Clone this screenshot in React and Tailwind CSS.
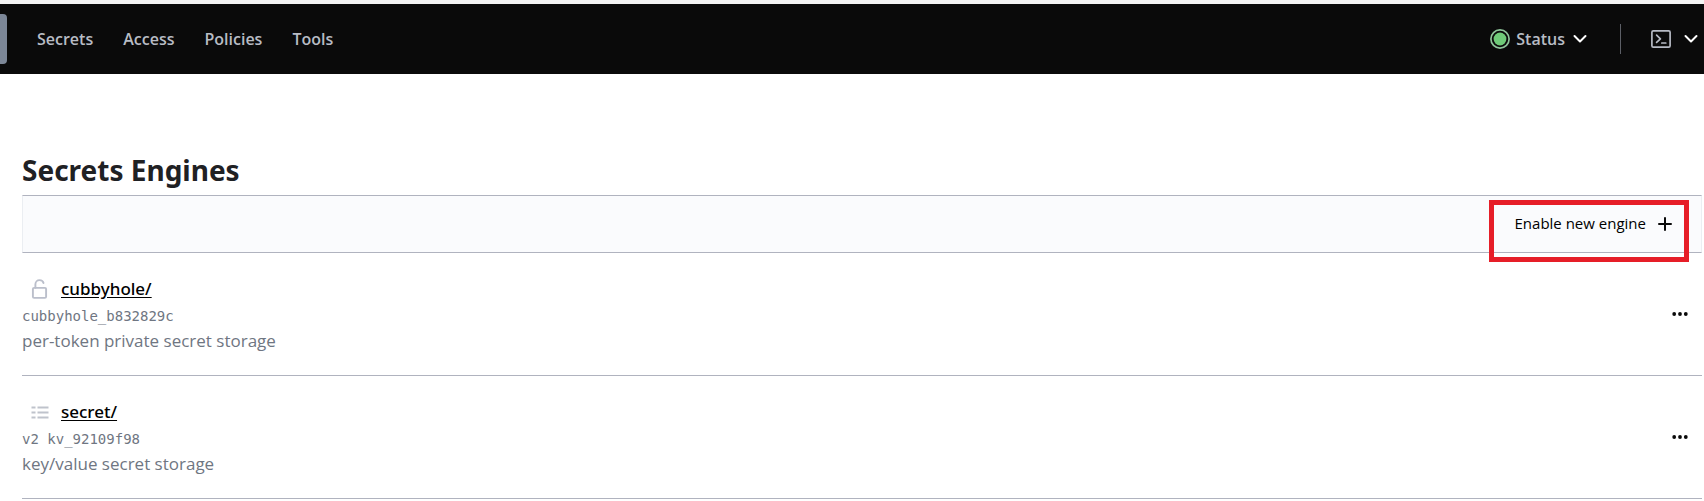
import React from "react";

const NAV = ["Secrets", "Access", "Policies", "Tools"];

const ENGINES = [
  { name: "cubbyhole/", accessor: "cubbyhole_b832829c", description: "per-token private secret storage", icon: "lock" },
  { name: "secret/", accessor: "v2 kv_92109f98", description: "key/value secret storage", icon: "list" },
];

function Chevron() {
  return (
    <svg width="14" height="14" viewBox="0 0 14 14" fill="none" stroke="#fff" strokeWidth="2" strokeLinecap="round" strokeLinejoin="round" aria-hidden="true">
      <path d="M1.5 4 7 9.5l5.5-5.5" />
    </svg>
  );
}

function StatusDot() {
  return (
    <svg width="20" height="20" viewBox="0 0 20 20" aria-hidden="true">
      <circle cx="10" cy="10" r="9.1" fill="none" stroke="#8fc49a" strokeWidth="1.7" />
      <circle cx="10" cy="10" r="6.4" fill="#6fcb78" />
    </svg>
  );
}

function Terminal() {
  return (
    <svg width="20" height="18" viewBox="0 0 20 18" fill="none" stroke="#b6bac4" strokeWidth="1.7" strokeLinecap="round" strokeLinejoin="round" aria-hidden="true">
      <rect x="0.9" y="0.9" width="18.2" height="16.2" rx="1.4" />
      <path d="M5.6 5.2 9.4 8.8l-3.8 3.6M10.8 13h4" />
    </svg>
  );
}

function EngineIcon({ kind }) {
  if (kind === "lock") {
    return (
      <svg width="20" height="20" viewBox="0 0 20 20" fill="none" stroke="#bbbfcb" strokeWidth="1.9" strokeLinecap="round" strokeLinejoin="round" aria-hidden="true">
        <rect x="2.9" y="8.9" width="13.2" height="10" rx="1.2" />
        <path d="M5.4 8.7V5.2A4.1 4.1 0 0 1 9.5 1.1c2.1 0 3.6 1.2 4 2.9" />
      </svg>
    );
  }
  return (
    <svg width="20" height="20" viewBox="0 0 20 20" fill="none" stroke="#bfc3cc" strokeWidth="2.2" aria-hidden="true">
      <path d="M1.5 5.5h4M7.5 5.5h11M1.5 10.5h4M7.5 10.5h11M1.5 15.5h4M7.5 15.5h11" />
    </svg>
  );
}

function EngineRow({ engine }) {
  return (
    <li className="flex items-center justify-between border-b border-[#b0b3bf] pt-6 pb-5">
      <div>
        <div className="flex h-6 items-center gap-[11px] pl-2">
          <EngineIcon kind={engine.icon} />
          <a href="#engine" className="font-['Noto_Sans',sans-serif] text-[17px] leading-6 font-medium text-black underline underline-offset-2">
            {engine.name}
          </a>
        </div>
        <code className="block pt-1 font-['DejaVu_Sans_Mono',monospace] text-[14px] leading-[22px] text-[#6f7682]">{engine.accessor}</code>
        <p className="text-[17px] leading-7 text-[#6f7682]">{engine.description}</p>
      </div>
      <button type="button" aria-label={`Actions for ${engine.name}`} className="mr-3.5 mb-1 flex h-6 items-center">
        <svg width="16" height="6" viewBox="0 0 16 6" fill="#0a0a0a" aria-hidden="true">
          <circle cx="2.2" cy="3" r="1.9" />
          <circle cx="8" cy="3" r="1.9" />
          <circle cx="13.8" cy="3" r="1.9" />
        </svg>
      </button>
    </li>
  );
}

export default function App() {
  return (
    <div className="bg-white font-['Open_Sans',sans-serif] text-[#1f2124]">
      <header className="flex h-[74px] items-center justify-between border-t-4 border-[#f4f4f4] bg-[#0a0a0a] pr-1.5 text-base font-semibold text-[#b8bcc4]">
        <div className="flex items-center">
          <span className="h-[50px] w-[7px] rounded-r bg-[#7c8797]" />
          <nav className="flex gap-[30px] pl-[30px]">
            {NAV.map((item) => (
              <a key={item} href={`#${item.toLowerCase()}`}>{item}</a>
            ))}
          </nav>
        </div>
        <div className="flex items-center">
          <button type="button" className="flex items-center">
            <StatusDot />
            <span className="pr-2 pl-1.5">Status</span>
            <Chevron />
          </button>
          <span className="mr-[30px] ml-[33px] h-[30px] w-px bg-[#5c5f66]" />
          <button type="button" aria-label="Console" className="flex items-center gap-[13px]">
            <Terminal />
            <Chevron />
          </button>
        </div>
      </header>

      <main className="pt-[76px] pr-[2px] pl-[22px]">
        <h1 className="pb-[5px] font-['Noto_Sans',sans-serif] text-[28px] leading-10 font-bold">Secrets Engines</h1>
        <div className="flex h-[58px] items-start justify-end border border-x-[#ebeef2] border-y-[#b0b3bf] bg-[#fafbfd] pt-1 pr-3">
          <button type="button" className="flex h-[62px] shrink-0 items-start gap-3 border-5 border-[#e61e28] pt-1.5 pr-3 pl-[21px] text-[15px] leading-6 text-black">
            Enable new engine
            <svg className="mt-1.5" width="14" height="14" viewBox="0 0 14 14" stroke="#0a0a0a" strokeWidth="2" strokeLinecap="round" aria-hidden="true">
              <path d="M7 1v12M1 7h12" />
            </svg>
          </button>
        </div>
        <ul>
          {ENGINES.map((engine) => (
            <EngineRow key={engine.name} engine={engine} />
          ))}
        </ul>
      </main>
    </div>
  );
}
